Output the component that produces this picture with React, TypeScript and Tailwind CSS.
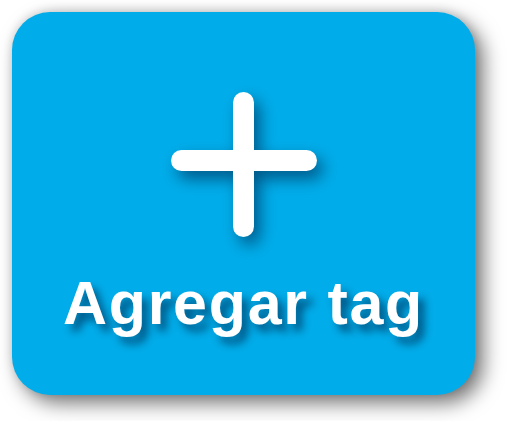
export default function App() {
  return (
    <div className="h-[421px] w-[508px] overflow-hidden bg-white pl-[12px] pt-[12px]">
      <div className="flex h-[383px] w-[463px] flex-col items-center rounded-[38px] bg-[#00adea] shadow-[8px_8px_20px_rgba(0,0,0,0.55),0_-2px_10px_rgba(0,0,0,0.12)]">
        <div className="relative mt-[80px] h-[145px] w-[146px] drop-shadow-[6px_8px_8px_rgba(0,45,85,0.65)]">
          <div className="absolute left-[62px] top-0 h-[145px] w-[21px] rounded-full bg-white" />
          <div className="absolute left-0 top-[58px] h-[21px] w-[146px] rounded-full bg-white" />
        </div>
        <p className="mt-[36px] font-['Liberation_Sans',Arial,sans-serif] text-[61px] font-bold leading-none tracking-[1.7px] text-white [text-shadow:6px_7px_9px_rgba(0,45,85,0.7)]">
          Agregar tag
        </p>
      </div>
    </div>
  );
}
